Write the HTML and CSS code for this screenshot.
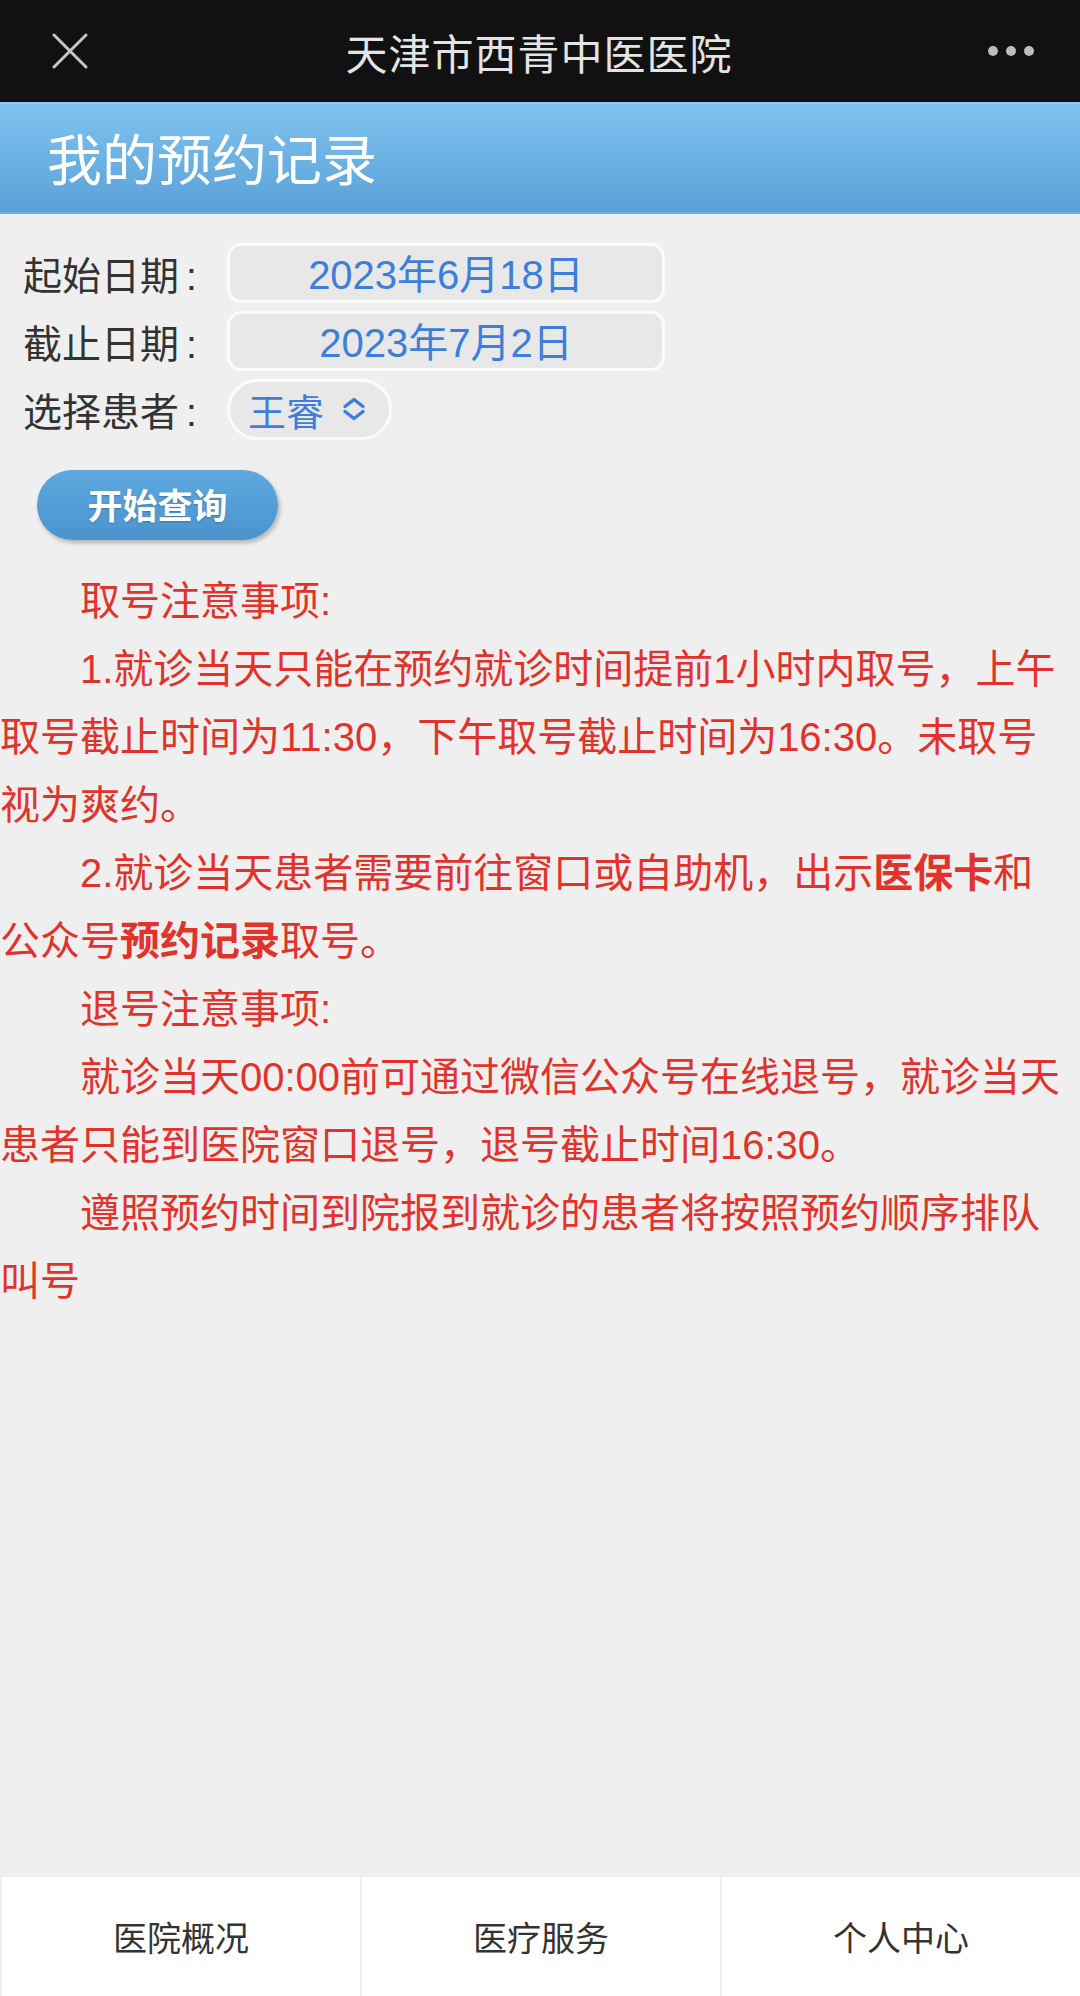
FILE: index.html
```html
<!DOCTYPE html>
<html lang="zh-CN">
<head>
<meta charset="utf-8">
<title>我的预约记录</title>
<link rel="stylesheet" href="styles.css">
</head>
<body>
<div class="page">
  <div class="topbar">
    <svg class="close" width="36" height="36" viewBox="0 0 36 36"><path d="M2 2 L34 34 M34 2 L2 34" stroke="#c6c6c6" stroke-width="3" stroke-linecap="round" fill="none"/></svg>
    <div class="topbar-title">天津市西青中医医院</div>
    <div class="dots"><span></span><span></span><span></span></div>
  </div>
  <div class="header">我的预约记录</div>
  <div class="form">
    <div class="row">
      <span class="label">起始日期<span class="colon">:</span></span>
      <div class="datebox">2023年6月18日</div>
    </div>
    <div class="row">
      <span class="label">截止日期<span class="colon">:</span></span>
      <div class="datebox">2023年7月2日</div>
    </div>
    <div class="row">
      <span class="label">选择患者<span class="colon">:</span></span>
      <div class="select">王睿
        <svg class="chev" width="24" height="24" viewBox="0 0 24 24"><path d="M3 9.5 L12 2.5 L21 9.5 M3 14.5 L12 21.5 L21 14.5" stroke="#3b7fdb" stroke-width="3.4" stroke-linecap="round" stroke-linejoin="round" fill="none"/></svg>
      </div>
    </div>
    <div class="btnrow"><div class="btn">开始查询</div></div>
  </div>
  <div class="notice">
    <p class="ind">取号注意事项:</p>
    <p class="ind">1.就诊当天只能在预约就诊时间提前1小时内取号，上午取号截止时间为11:30，下午取号截止时间为16:30。未取号视为爽约。</p>
    <p class="ind">2.就诊当天患者需要前往窗口或自助机，出示<b>医保卡</b>和公众号<b>预约记录</b>取号。</p>
    <p class="ind">退号注意事项:</p>
    <p class="ind">就诊当天00:00前可通过微信公众号在线退号，就诊当天患者只能到医院窗口退号，退号截止时间16:30。</p>
    <p class="ind">遵照预约时间到院报到就诊的患者将按照预约顺序排队叫号</p>
  </div>
  <div class="nav">
    <div class="nav-item">医院概况</div>
    <div class="nav-item">医疗服务</div>
    <div class="nav-item">个人中心</div>
  </div>
</div>
</body>
</html>
```
FILE: styles.css
```css
* { box-sizing: border-box; }
html, body { margin: 0; padding: 0; }
body {
  background: #efefef;
  font-family: "Liberation Sans", "Noto Sans CJK SC", sans-serif;
}
.page {
  width: 1080px;
  min-height: 1996px;
  display: flex;
  flex-direction: column;
  background: #efefef;
}
.topbar {
  height: 102px;
  background: #111111;
  display: flex;
  align-items: center;
  padding: 0 46px 0 52px;
}
.close { flex: none; }
.topbar-title {
  flex: 1;
  text-align: center;
  color: #e4e4e4;
  font-family: "Noto Sans CJK SC", sans-serif;
  font-size: 42px;
  letter-spacing: 1px;
  padding-left: 2px;
}
.dots { display: flex; gap: 8px; flex: none; }
.dots span {
  width: 10px; height: 10px; border-radius: 50%;
  background: #bdbdbd;
}
.header {
  height: 112px;
  background: linear-gradient(#7ec3ef, #5aa1d8);
  border-top: 2px solid #8ccbf2;
  border-bottom: 2px solid #68aee0;
  color: #ffffff;
  font-family: "Noto Sans CJK SC", sans-serif;
  font-size: 55px;
  display: flex;
  align-items: center;
  padding-left: 47px;
  padding-bottom: 4px;
}
.form {
  padding: 29px 0 0 23px;
  display: flex;
  flex-direction: column;
  gap: 8px;
}
.row {
  display: flex;
  align-items: center;
  height: 60px;
}
.label {
  width: 204px;
  color: #333333;
  font-family: "Noto Sans CJK SC", sans-serif;
  font-size: 39px;
}
.colon { margin-left: 7px; font-family: "Liberation Sans", sans-serif; }
.datebox {
  width: 438px;
  height: 60px;
  background: #e8e8e8;
  border: 3px solid #fbfbfb;
  border-radius: 14px;
  color: #3b7fdb;
  font-size: 40px;
  display: flex;
  align-items: center;
  justify-content: center;
  padding-bottom: 2px;
}
.select {
  height: 61px;
  background: #e8e8e8;
  border: 3px solid #fbfbfb;
  border-radius: 31px;
  color: #3b7fdb;
  font-family: "Noto Sans CJK SC", sans-serif;
  font-size: 38px;
  display: flex;
  align-items: center;
  padding: 0 16px 0 18px;
  gap: 18px;
  width: 165px;
}
.chev { flex: none; }
.btnrow { padding: 23px 0 0 14px; }
.btn {
  width: 241px;
  height: 70px;
  border-radius: 35px;
  background: linear-gradient(#5ea9df, #4a93cf);
  box-shadow: 2px 3px 4px rgba(0,0,0,0.25);
  color: #ffffff;
  font-family: "Noto Sans CJK SC", sans-serif;
  font-weight: bold;
  font-size: 35px;
  display: flex;
  align-items: center;
  justify-content: center;
  text-shadow: 0 1px 2px rgba(0,0,0,0.25);
  padding-bottom: 3px;
}
.notice {
  padding: 27px 14px 0 0;
  color: #e2332b;
  font-size: 40px;
  line-height: 68px;
}
.notice p { margin: 0; }
.notice .ind { text-indent: 2em; }
.notice b { font-weight: bold; }
.nav {
  margin-top: auto;
  height: 119px;
  display: flex;
  background: #efefef;
}
.nav-item {
  flex: 1;
  background: #ffffff;
  margin-left: 2px;
  display: flex;
  align-items: center;
  justify-content: center;
  color: #333333;
  font-family: "Noto Sans CJK SC", sans-serif;
  font-size: 34px;
}
```
